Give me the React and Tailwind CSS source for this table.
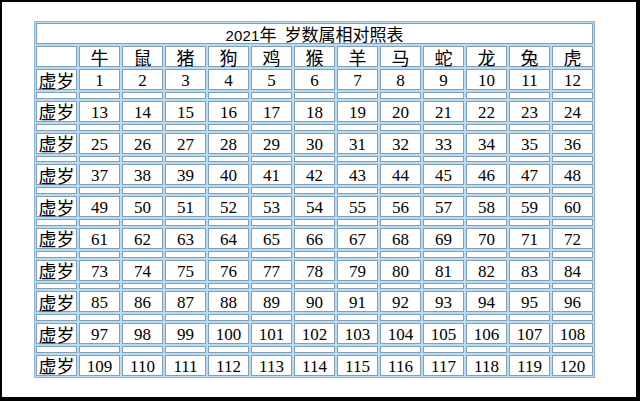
import React from 'react';

const animals = ['牛', '鼠', '猪', '狗', '鸡', '猴', '羊', '马', '蛇', '龙', '兔', '虎'];
const cjk = { fontFamily: '"Noto Sans CJK SC", "Noto Sans", sans-serif' };
const serif = { fontFamily: '"Liberation Serif", "Times New Roman", serif' };

const cell = 'bg-white border border-[#7f9fba] flex items-center justify-center';

export default function App() {
  const rows = Array.from({ length: 10 }, (_, r) =>
    Array.from({ length: 12 }, (_, c) => r * 12 + c + 1)
  );

  return (
    <div className="w-[640px] h-[401px] bg-white border-black border-l-2 border-t-2 border-r-4 border-b-4 overflow-hidden">
      <div className="ml-[32px] mt-[19px] w-[561px] bg-[#b9dcf2] border border-[#8db4d4] p-[1px]">
        <div className="grid grid-cols-[repeat(13,41px)] gap-[2px] text-black">
          <div className={`${cell} col-span-13 h-[21px] gap-[8px]`}>
            <span className="text-[17px] leading-none" style={cjk}>
              <span className="text-[15px] tracking-[0.2px]" style={{ fontFamily: '"Liberation Sans", Arial, sans-serif' }}>2021</span>年
            </span>
            <span className="text-[17px] leading-none" style={cjk}>岁数属相对照表</span>
          </div>

          <div className={`${cell} h-[21px]`} />
          {animals.map((a) => (
            <div key={a} className={`${cell} h-[21px] text-[18px] leading-none`} style={cjk}>
              {a}
            </div>
          ))}

          {rows.map((nums, r) => (
            <React.Fragment key={r}>
              <div className={`${cell} h-[21px] text-[18px] leading-none`} style={cjk}>
                虚岁
              </div>
              {nums.map((n) => (
                <div key={n} className={`${cell} h-[21px] text-[17px] leading-none pt-[2px]`} style={serif}>
                  {n}
                </div>
              ))}
              {r < 9 &&
                Array.from({ length: 13 }, (_, i) => (
                  <div key={`s${i}`} className="bg-white border border-[#7f9fba] h-[6.78px]" />
                ))}
            </React.Fragment>
          ))}
        </div>
      </div>
    </div>
  );
}
